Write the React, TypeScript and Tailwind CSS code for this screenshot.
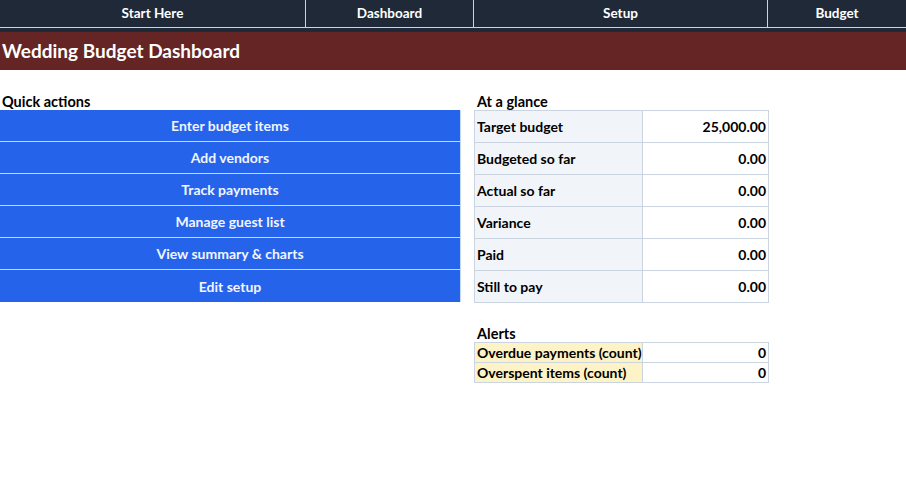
import React from "react";

const nav = [
  { label: "Start Here", w: "w-[306px]" },
  { label: "Dashboard", w: "w-[168px]" },
  { label: "Setup", w: "w-[294px]" },
  { label: "Budget", w: "w-[138px]" },
];

const actions = [
  "Enter budget items",
  "Add vendors",
  "Track payments",
  "Manage guest list",
  "View summary & charts",
  "Edit setup",
];

const glance = [
  ["Target budget", "25,000.00"],
  ["Budgeted so far", "0.00"],
  ["Actual so far", "0.00"],
  ["Variance", "0.00"],
  ["Paid", "0.00"],
  ["Still to pay", "0.00"],
];

const alerts = [
  ["Overdue payments (count)", "0"],
  ["Overspent items (count)", "0"],
];

export default function App() {
  return (
    <div
      className="w-[906px] h-[501px] bg-white overflow-hidden font-bold text-[14px] whitespace-nowrap"
      style={{ fontFamily: "Lato, 'Open Sans', sans-serif" }}
    >
      <div className="flex h-[28px] bg-[#1f2937] border-b border-[#cbd5e1]">
        {nav.map((n, i) => (
          <div
            key={n.label}
            className={`${n.w} flex items-center justify-center text-white text-[13.5px] ${
              i < nav.length - 1 ? "border-r border-[#cbd5e1]" : ""
            }`}
          >
            {n.label}
          </div>
        ))}
      </div>
      <div className="h-[4px] bg-[#1f2937]" />
      <div className="h-[38px] bg-[#652525] flex items-center pl-[2px] text-white text-[19px]">
        Wedding Budget Dashboard
      </div>
      <div className="flex pt-[20px]">
        <div className="w-[461px] flex flex-col">
          <div className="h-[20px] flex items-end pl-[2px] pb-[1px] leading-none text-black text-[14.5px]">
            Quick actions
          </div>
          <div className="flex flex-col border-r border-[#bfdbfe]">
            {actions.map((a, i) => (
              <div
                key={a}
                className={`h-[32px] bg-[#2563eb] text-[#f1f5ff] flex items-center justify-center ${
                  i < actions.length - 1 ? "border-b border-[#bfdbfe]" : ""
                }`}
              >
                {a}
              </div>
            ))}
          </div>
        </div>
        <div className="ml-[13px] w-[295px] flex flex-col">
          <div className="h-[20px] flex items-end pl-[3px] pb-[1px] leading-none text-black text-[14.5px]">
            At a glance
          </div>
          <div className="flex flex-col border-x border-t border-[#cbd5e1] text-black">
            {glance.map(([l, v]) => (
              <div key={l} className="flex h-[32px] border-b border-[#cbd5e1]">
                <div className="w-[168px] bg-[#f1f5f9] border-r border-[#cbd5e1] flex items-center pl-[2px]">
                  {l}
                </div>
                <div className="flex-1 bg-white flex items-center justify-end pr-[2px]">{v}</div>
              </div>
            ))}
          </div>
          <div className="h-[19px]" />
          <div className="h-[20px] flex items-end pl-[3px] pb-[1px] leading-none text-black text-[14.5px]">
            Alerts
          </div>
          <div className="flex flex-col border-x border-t border-[#cbd5e1] text-black">
            {alerts.map(([l, v]) => (
              <div key={l} className="flex h-[20px] border-b border-[#cbd5e1]">
                <div className="w-[168px] bg-[#fef3c7] border-r border-[#cbd5e1] flex items-center pl-[2px]">
                  {l}
                </div>
                <div className="flex-1 bg-white flex items-center justify-end pr-[2px]">{v}</div>
              </div>
            ))}
          </div>
        </div>
      </div>
    </div>
  );
}
